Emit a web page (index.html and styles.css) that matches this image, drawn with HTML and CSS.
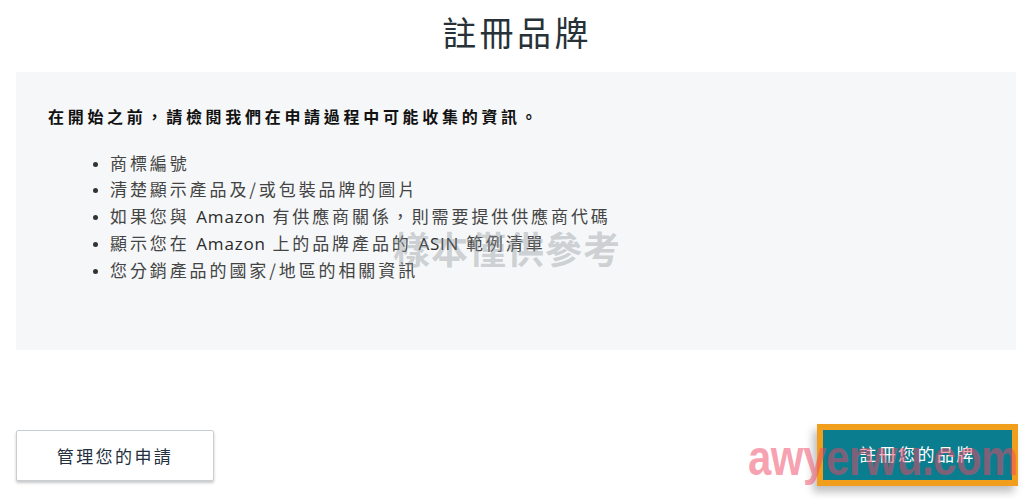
FILE: index.html
```html
<!DOCTYPE html>
<html lang="zh-Hant">
<head>
<meta charset="utf-8">
<title>註冊品牌</title>
<link rel="stylesheet" href="styles.css">
</head>
<body>
<div class="page">
  <h1 class="title">註冊品牌</h1>
  <section class="panel">
    <p class="lead">在開始之前，請檢閱我們在申請過程中可能收集的資訊。</p>
    <ul class="items">
      <li>商標編號</li>
      <li>清楚顯示產品及/或包裝品牌的圖片</li>
      <li>如果您與 <span class="latin">Amazon</span> 有供應商關係，則需要提供供應商代碼</li>
      <li>顯示您在 <span class="latin">Amazon</span> 上的品牌產品的 <span class="latin">ASIN</span> 範例清單</li>
      <li>您分銷產品的國家/地區的相關資訊</li>
    </ul>
  </section>
  <div class="actions">
    <button class="btn btn-secondary">管理您的申請</button>
    <button class="btn btn-primary">註冊您的品牌</button>
  </div>
  <div class="wm wm-gray">樣本僅供參考</div>
  <div class="wm wm-pink">awyerwu.com</div>
</div>
</body>
</html>
```

FILE: styles.css
```css
* { box-sizing: border-box; }
html, body { margin: 0; padding: 0; background: #ffffff; }
body {
  font-family: "Noto Sans CJK TC", "Noto Sans", sans-serif;
  color: #232f3e;
  width: 1024px;
  height: 499px;
  overflow: hidden;
}
.page {
  position: relative;
  height: 499px;
  display: flex;
  flex-direction: column;
}
.title {
  margin: 0;
  height: 72px;
  display: flex;
  align-items: center;
  justify-content: center;
  font-size: 34px;
  font-weight: 400;
  letter-spacing: 3.4px;
  color: #263238;
  padding-left: 10px;
  padding-bottom: 10px;
}
.panel {
  margin: 0 8px 0 16px;
  height: 278px;
  background: #f5f7f8;
  padding: 31px 32px 0 32px;
}
.lead {
  margin: 0;
  font-size: 16px;
  font-weight: 700;
  letter-spacing: 3.7px;
  line-height: 26px;
  color: #111;
}
.items {
  margin: 21px 0 0 0;
  padding-left: 62px;
  list-style: disc;
  font-size: 17px;
  letter-spacing: 2.9px;
  line-height: 26.3px;
  color: #444;
}
.items li::marker { color: #333; font-size: 13px; }
.latin { font-family: "Open Sans", "Noto Sans", sans-serif; letter-spacing: 0.8px; color: #2b2b2b; }
.actions {
  display: flex;
  justify-content: space-between;
  align-items: center;
  padding: 74px 6px 0 16px;
}
.btn {
  font-family: "Noto Sans CJK TC", sans-serif;
  font-size: 17px;
  letter-spacing: 2.4px;
  cursor: pointer;
}
.btn-secondary {
  width: 198px;
  height: 51px;
  background: #fff;
  border: 1px solid #c9ced3;
  border-radius: 2px;
  box-shadow: 0 2px 3px rgba(0,0,0,0.22);
  color: #232f3e;
}
.btn-primary {
  width: 201px;
  height: 62px;
  background: #0a7d8e;
  border: 6px solid #f19e1c;
  color: #fff;
  box-shadow: -4px 6px 8px rgba(0,0,0,0.25);
  padding-bottom: 4px;
}
.wm {
  position: absolute;
  pointer-events: none;
  white-space: nowrap;
}
.wm-gray {
  left: 393px;
  top: 221px;
  font-size: 37px;
  font-weight: 700;
  letter-spacing: 1px;
  color: rgba(140, 148, 152, 0.4);
}
.wm-pink {
  left: 748px;
  top: 438px;
  font-family: "Liberation Sans", Arial, sans-serif;
  font-size: 42px;
  font-weight: 700;
  letter-spacing: -0.5px;
  line-height: 50px;
  transform: scaleY(1.2);
  transform-origin: left bottom;
  color: rgba(238, 70, 100, 0.5);
}
```
